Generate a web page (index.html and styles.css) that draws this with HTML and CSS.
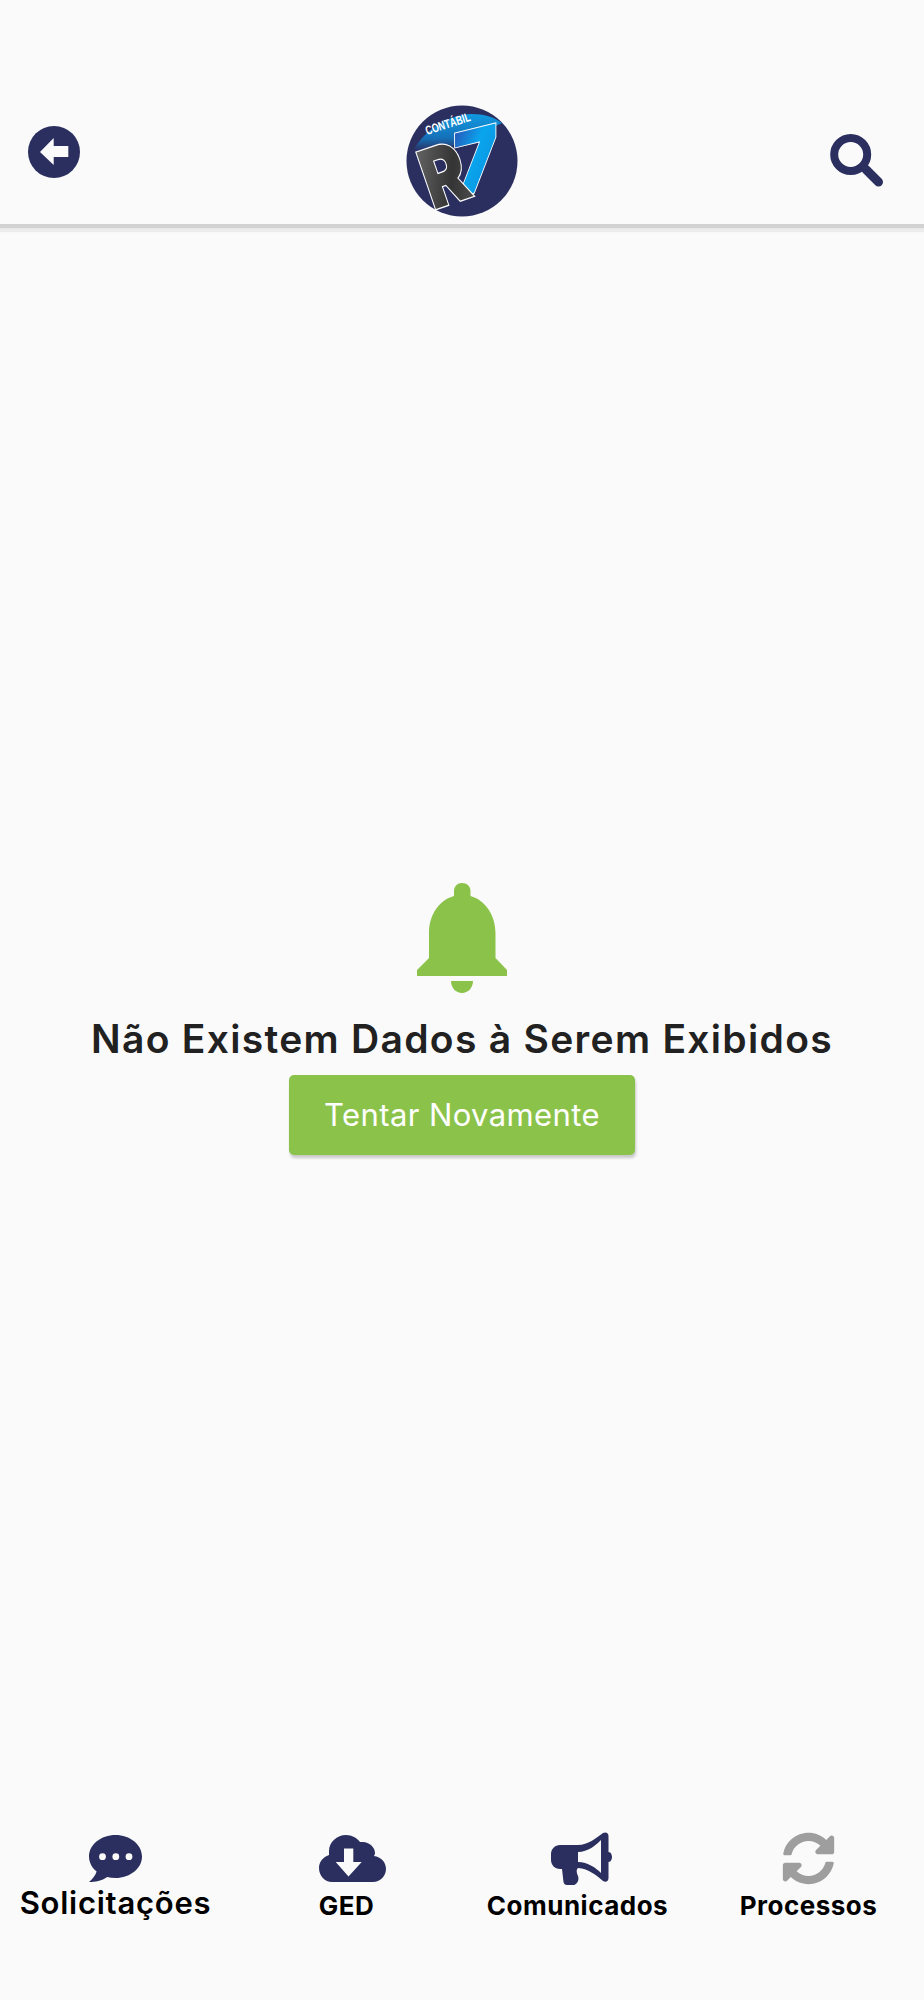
FILE: index.html
```html
<!DOCTYPE html>
<html lang="pt-BR">
<head>
  <meta charset="UTF-8">
  <meta name="viewport" content="width=device-width, initial-scale=1.0">
  <title>Contábil R7</title>
  <link rel="stylesheet" href="styles.css">
</head>
<body>
  <div id="app">
    <header class="topbar">
      <svg class="back-icon" viewBox="0 0 52 52">
        <circle cx="26" cy="26" r="26" fill="#2b2f5f"/>
        <path d="M12 26 L25.700 12 V20 H40.300 V31 H25.700 V39 Z" fill="#fafafa"/>
      </svg>
      <svg class="logo" viewBox="0 0 112 112">
        <defs>
          <linearGradient id="capGrad" x1="0" y1="0" x2="0" y2="1">
            <stop offset="0" stop-color="#0f9be2"/>
            <stop offset="0.65" stop-color="#1570b8"/>
            <stop offset="1" stop-color="#2b2f5f"/>
          </linearGradient>
          <linearGradient id="sevenGrad" x1="0" y1="0" x2="1" y2="1">
            <stop offset="0" stop-color="#2f3fa8"/>
            <stop offset="0.45" stop-color="#0aa5ee"/>
            <stop offset="1" stop-color="#0a8ad8"/>
          </linearGradient>
          <linearGradient id="rGrad" x1="0" y1="0" x2="1" y2="1">
            <stop offset="0" stop-color="#707070"/>
            <stop offset="0.6" stop-color="#343434"/>
            <stop offset="1" stop-color="#555"/>
          </linearGradient>
        </defs>
        <circle cx="56" cy="56" r="55.500" fill="#2b2f5f"/>
        <path d="M7 46 C20 22 45 10 65 9 C78 9 88 12 96 18 L50 40 L20 46 Z" fill="url(#capGrad)"/>
        <text class="logo-small" transform="translate(21 30) rotate(-18) scale(.72 1)">CONTÁBIL</text>
        <text class="logo-seven" transform="translate(47 93) skewY(-14) scale(.85 1)">7</text>
        <text class="logo-r" transform="translate(27 105) rotate(-19) scale(.8 1)">R</text>
      </svg>
      <svg class="search-icon" viewBox="0 0 54 55">
        <circle cx="20.700" cy="21.500" r="16.500" fill="none" stroke="#2b2f5f" stroke-width="8"/>
        <line x1="36" y1="36.500" x2="48.500" y2="49" stroke="#2b2f5f" stroke-width="9" stroke-linecap="round"/>
      </svg>
    </header>

    <main class="empty">
      <svg class="bell" viewBox="0 0 90 110">
        <path d="M45 0 C40.500 0 37 3.500 37 8 V13 C22 17 12 32 12 50 V75 L0 87 V93 H90 V87 L78.500 75 V50 C78.500 32 68 17 53.500 13 V8 C53.500 3.500 50 0 45 0 Z M34 98 H56 C56 105 51 110 45 110 C39 110 34 105 34 98 Z" fill="#8bc34a"/>
      </svg>
      <h1 class="empty-title">Não Existem Dados à Serem Exibidos</h1>
      <button class="retry">Tentar Novamente</button>
    </main>

    <nav class="tabs">
      <div class="tab active">
        <span class="tab-icon">
          <svg width="53" height="47" viewBox="0 0 53 47">
            <path d="M26.500 0 C41 0 53 9.600 53 21.500 C53 33.400 41 43 26.500 43 C23.500 43 20.800 42.600 18.200 41.900 C13 45.800 6 47 0 47 C4 43.500 6.500 40 7.600 36.500 C3 32.700 0 27.400 0 21.500 C0 9.600 12 0 26.500 0 Z" fill="#2b2f5f"/>
            <circle cx="13.500" cy="21.700" r="3.400" fill="#fafafa"/>
            <circle cx="26.800" cy="21.700" r="3.400" fill="#fafafa"/>
            <circle cx="40" cy="21.700" r="3.400" fill="#fafafa"/>
          </svg>
        </span>
        <span class="tab-label">Solicitações</span>
      </div>
      <div class="tab">
        <span class="tab-icon shift-cloud">
          <svg width="67" height="47" viewBox="0 0 67 47">
            <path d="M13 47 C6 47 0 41 0 33 C0 27 4 22 10 20 C10 18 10 17 10 16 C10 7 18 0 27 0 C33 0 38 3 41 7 C42 7 43 7 44 7 C50 7 56 12 56 18 C56 19 56 19 55 21 C62 22 67 27 67 34 C67 41 61 47 54 47 Z" fill="#2b2f5f"/>
            <path d="M25 13.500 H34.300 V27 H42.700 L29.500 41.500 L16.700 27 H25 Z" fill="#fafafa"/>
          </svg>
        </span>
        <span class="tab-label">GED</span>
      </div>
      <div class="tab">
        <span class="tab-icon shift-horn">
          <svg width="61" height="53" viewBox="0 0 61 53">
            <path fill-rule="evenodd" d="M9 13 H27 C37 13 45 6 52 1 C55 -0.500 57.500 1 57.500 4 V20 C60 20 61 23 61 25 C61 27 60 30 57.500 30 V46 C57.500 49 55 51 52 49 C45 43 38 37 27 36 C25 38 25.500 41 27 44 C28.500 48 26 53 22 53 H16 C14 53 13 52 12.500 50 L11 37 H9 C4 37 0 33 0 28 V22 C0 17 4 13 9 13 Z M27 20 V30 C37 30 45 36 50 41 V8 C45 13 37 20 27 20 Z" fill="#2b2f5f"/>
          </svg>
        </span>
        <span class="tab-label">Comunicados</span>
      </div>
      <div class="tab">
        <span class="tab-icon">
          <svg width="53" height="53" viewBox="0 0 512 512">
            <path d="M370.720 133.280C339.458 104.008 298.888 87.962 255.848 88c-77.458.068-144.328 53.178-162.791 126.850-1.344 5.363-6.122 9.150-11.651 9.150H24.103c-7.498 0-13.194-6.807-11.807-14.176C33.933 94.924 134.813 8 256 8c66.448 0 126.791 26.136 171.315 68.685L463.030 40.970C478.149 25.851 504 36.559 504 57.941V192c0 13.255-10.745 24-24 24H345.941c-21.382 0-32.090-25.851-16.971-40.971l41.750-41.749zM32 296h134.059c21.382 0 32.090 25.851 16.971 40.971l-41.750 41.750c31.262 29.273 71.835 45.319 114.876 45.280 77.418-.07 144.315-53.144 162.787-126.849 1.344-5.363 6.122-9.150 11.651-9.150h57.304c7.498 0 13.194 6.807 11.807 14.176C478.067 417.076 377.187 504 256 504c-66.448 0-126.791-26.136-171.315-68.685L48.970 471.030C33.851 486.149 8 475.441 8 454.059V320c0-13.255 10.745-24 24-24z" fill="#9e9e9e"/>
          </svg>
        </span>
        <span class="tab-label">Processos</span>
      </div>
    </nav>
  </div>
</body>
</html>
```

FILE: styles.css
```css
body {
  margin: 0;
  background: #fafafa;
  font-family: Inter, "Noto Sans", sans-serif;
}
#app {
  display: flex;
  flex-direction: column;
  height: 2000px;
}
.topbar {
  display: grid;
  grid-template-columns: 1fr auto 1fr;
  align-items: start;
  box-sizing: border-box;
  height: 224px;
  padding: 105px 40px 0 28px;
  background: #fafafa;
  box-shadow: 0 4px 1px #d2d2d2, 0 8px 1px #ececec;
}
.back-icon {
  width: 52px;
  height: 52px;
  margin-top: 21px;
}
.logo {
  width: 112px;
  height: 112px;
  margin-left: 11px;
  overflow: visible;
}
.logo-small {
  font-family: "Liberation Sans", sans-serif;
  font-weight: 700;
  font-size: 12.5px;
  fill: #fff;
}
.logo-r {
  font-weight: 900;
  font-size: 82px;
  fill: url(#rGrad);
  stroke: #fff;
  stroke-width: 2.5px;
  paint-order: stroke;
}
.logo-seven {
  font-weight: 900;
  font-size: 88px;
  fill: url(#sevenGrad);
  stroke: #fff;
  stroke-width: 2px;
  paint-order: stroke;
}
.search-icon {
  justify-self: end;
  width: 54px;
  height: 55px;
  margin-top: 28px;
}
.empty {
  flex: 1;
  display: flex;
  flex-direction: column;
  align-items: center;
  justify-content: center;
}
.bell {
  width: 90px;
  height: 110px;
}
.empty-title {
  margin: 22px 0 0;
  font-size: 39px;
  line-height: 48px;
  font-weight: 600;
  letter-spacing: 1.3px;
  color: #212121;
}
.retry {
  width: 346px;
  height: 80px;
  margin-top: 12px;
  padding: 0 0 2px;
  border: none;
  border-radius: 5px;
  background: #8bc34a;
  color: #fff;
  font-family: inherit;
  font-size: 31px;
  letter-spacing: 0.4px;
  box-shadow: 1px 3px 3px rgba(0,0,0,0.2);
}
.tabs {
  display: grid;
  grid-template-columns: repeat(4, 1fr);
  height: 186px;
  box-sizing: border-box;
  padding-top: 18px;
}
.tab {
  display: flex;
  flex-direction: column;
  align-items: center;
}
.tab-icon {
  display: flex;
  align-items: center;
  justify-content: center;
  height: 53px;
}
.shift-cloud {
  margin-left: 12px;
}
.shift-horn {
  margin-left: 8px;
}
.tab-label {
  margin-top: 3px;
  font-size: 26px;
  line-height: 36px;
  font-weight: 700;
  letter-spacing: 0.5px;
  color: #000;
  white-space: nowrap;
}
.tab.active .tab-label {
  margin-top: 0;
  font-size: 31px;
  font-weight: 600;
  letter-spacing: 0.75px;
}
```
